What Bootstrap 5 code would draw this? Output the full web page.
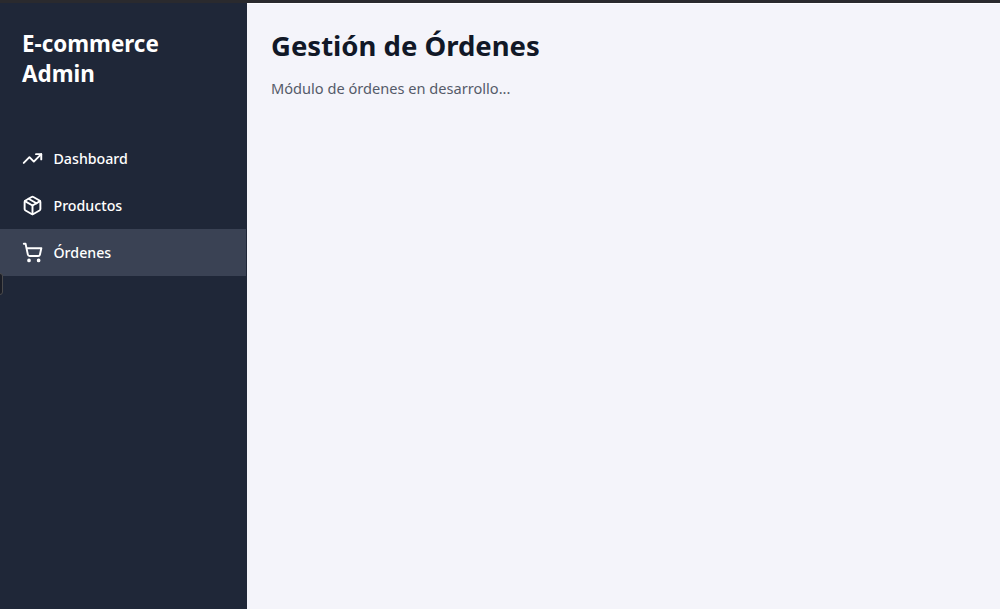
<!DOCTYPE html>
<html lang="es">
<head>
    <meta charset="UTF-8">
    <title>E-commerce Admin</title>
    <link rel="stylesheet" href="https://cdn.jsdelivr.net/npm/bootstrap@5.3.0/dist/css/bootstrap.min.css">
    <style>
        html, body { height: 100%; }
        body {
            font-family: "Noto Sans", sans-serif;
            background: #f4f4fa;
            border-top: 3px solid #2a2a2e;
            overflow: hidden;
        }
        .admin-shell { height: 100%; }
        .admin-side { width: 247px; background: #1f2738; position: relative; }
        .admin-brand {
            font-size: 22.4px;
            line-height: 30px;
            font-weight: 700;
            color: #fff;
            padding: 26px 22px 0;
            height: 132px;
        }
        .admin-link {
            height: 47px;
            padding-left: 22px;
            gap: 10.5px;
            color: #fff;
            font-size: 14.2px;
            font-weight: 500;
            text-decoration: none;
        }
        .admin-link.active-link { background: #3a4254; margin-right: 1px; }
        .admin-link svg { width: 21px; height: 21px; fill: none; stroke: #fff; stroke-width: 2.2; stroke-linecap: round; stroke-linejoin: round; }
        .admin-main { padding: 23px 24px 24px 24px; border-left: 1px solid #fdfdff; border-top: 1px solid #fdfdff; margin-left: -1px; }
        .admin-main h1 { font-size: 27.5px; font-weight: 700; color: #111827; line-height: 38px; margin-bottom: 13px; }
        .admin-main p { font-size: 14.6px; color: #545b69; }
        .edge-tab {
            position: absolute;
            left: -6px;
            top: 270px;
            width: 9px;
            height: 22px;
            border: 1px solid #4a4a4c;
            border-radius: 3px;
            background: #1a1d26;
        }
    </style>
</head>
<body>
    <div class="admin-shell d-flex">
        <aside class="admin-side flex-shrink-0">
            <div class="admin-brand">E-commerce<br>Admin</div>
            <nav class="d-flex flex-column">
                <a class="admin-link d-flex align-items-center" href="#">
                    <svg viewBox="0 0 24 24"><polyline points="22 7 13.5 15.5 8.5 10.5 2 17"/><polyline points="16 7 22 7 22 13"/></svg>
                    Dashboard
                </a>
                <a class="admin-link d-flex align-items-center" href="#">
                    <svg viewBox="0 0 24 24"><path d="M21 8a2 2 0 0 0-1-1.73l-7-4a2 2 0 0 0-2 0l-7 4A2 2 0 0 0 3 8v8a2 2 0 0 0 1 1.73l7 4a2 2 0 0 0 2 0l7-4A2 2 0 0 0 21 16Z"/><path d="m3.3 7 8.7 5 8.7-5"/><path d="M12 22V12"/><path d="m7.5 4.27 9 5.15"/></svg>
                    Productos
                </a>
                <a class="admin-link active-link d-flex align-items-center" href="#">
                    <svg viewBox="0 0 24 24"><circle cx="8" cy="21" r="1"/><circle cx="19" cy="21" r="1"/><path d="M2.05 2.05h2l2.66 12.42a2 2 0 0 0 2 1.58h9.78a2 2 0 0 0 1.95-1.57l1.65-7.43H5.12"/></svg>
                    Órdenes
                </a>
            </nav>
            <div class="edge-tab"></div>
        </aside>
        <main class="admin-main flex-grow-1">
            <h1>Gestión de Órdenes</h1>
            <p>Módulo de órdenes en desarrollo...</p>
        </main>
    </div>
    <script src="https://cdn.jsdelivr.net/npm/bootstrap@5.3.0/dist/js/bootstrap.bundle.min.js"></script>
</body>
</html>
